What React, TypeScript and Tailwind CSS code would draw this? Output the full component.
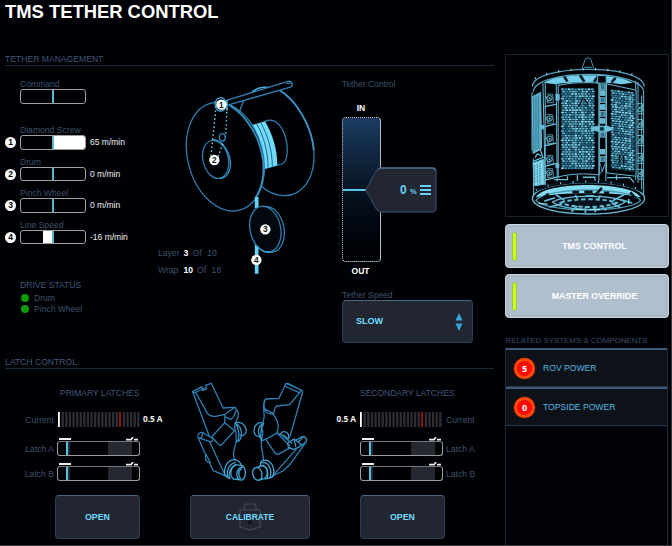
import React from "react";

const LABEL = "text-[8.6px] leading-[10px] text-[#3e516c] whitespace-nowrap";
const PANEL =
  "rounded-[4px] border border-[#2c3d55] border-t-[#48688a] bg-[#212630] text-[#6fdcff] font-bold";

function Gauge({ label, badge, value, children }: { label: string; badge?: string; value?: string; children?: React.ReactNode }) {
  return (
    <div className="flex h-[31.6px] items-start">
      <div className="flex h-[25px] w-[15px] items-end pb-[2px]">
        {badge && (
          <span className="flex size-[11px] items-center justify-center rounded-full bg-white text-[8.5px] font-bold leading-none text-black">
            {badge}
          </span>
        )}
      </div>
      <div>
        <div className={LABEL}>{label}</div>
        <div className="relative flex h-[14.5px] w-[66px] overflow-hidden rounded-[3px] border border-[#a0a0a0]">
          {children}
          <span className="absolute left-[31px] top-0 h-full w-[2px] bg-[#57b7cc]" />
        </div>
      </div>
      <div className="ml-[4px] mt-[12px] whitespace-nowrap text-[8.5px] leading-[10px] text-[#f2f2f2]">{value}</div>
    </div>
  );
}

function Heading({ children }: { children: React.ReactNode }) {
  return (
    <div className="h-[12px] w-[489px] border-b border-[#1b2a3b] text-[8.6px] leading-[11px] text-[#43567a]">{children}</div>
  );
}

function Num({ x, y, n }: { x: number; y: number; n: string }) {
  return (
    <g stroke="none">
      <circle cx={x} cy={y} r="15.5" fill="#fff" />
      <text x={x} y={y + 9} textAnchor="middle" fontSize="25" fontWeight="700" fill="#111">{n}</text>
    </g>
  );
}

function DrumDrawing() {
  return (
    <svg viewBox="0 0 510 630" className="h-[210px] w-[170px]" fill="none" stroke="#2f80b3" strokeWidth="3.8" strokeLinecap="round" strokeLinejoin="round">
      <path d="M388 57 C435 82 487 165 492 240 C497 320 458 376 400 374 C376 373 352 362 334 346" />
      <path d="M388 57 C442 90 485 168 491 235" stroke="#3a92c6" strokeWidth="5.5" />
      <path d="M308 62 C322 50 340 47 356 50" stroke="#4ab0de" strokeWidth="5" />
      <path d="M345 151 C367 140 389 153 403 188 C417 226 414 272 396 279 L344 293" />
      <path d="M306 162 L345 151 C368 190 382 236 382 283 L344 293 C341 246 331 198 306 162Z" fill="#6fdcff" stroke="none" />
      <path d="M321 160 C342 197 354 244 354 288 M333 156 C354 194 367 240 367 285" stroke="#12354a" strokeWidth="2.2" />
      <ellipse cx="226" cy="257" rx="112.7" ry="166" transform="rotate(-15 226 257)" fill="#000104" />
      <path d="M240 104 C288 133 329 195 339 268 C343 310 336 350 318 378" stroke="#388fbe" strokeWidth="5" />
      <path d="M280 91 L268 123" />
      <path d="M230 88 L414 31 C429 29 431 46 419 49 L230 103 Z" fill="#000104" strokeWidth="4" />
      <path d="M409 38 L422 36" strokeWidth="3" />
      <ellipse cx="197" cy="265" rx="38" ry="58" transform="rotate(-13 197 265)" />
      <path d="M190 207 C214 207 233 233 240 263 C246 296 233 321 211 322" stroke="#3c92bf" strokeWidth="4" />
      <g stroke="#66d6f4" strokeWidth="5" strokeDasharray="0.1 12">
        <path d="M198 108 L183 253" />
        <path d="M231 113 L227 193 L204 258" />
      </g>
      <ellipse cx="217" cy="199" rx="9" ry="11" />
      <ellipse cx="212" cy="100" rx="17" ry="20" stroke="#49a7d2" />
      <path d="M231 88 V118" stroke="#58bfe0" />
      <path d="M320 378 V411 M320 520 V608" stroke="#67d4f7" strokeWidth="11" strokeLinecap="butt" />
      <ellipse cx="357" cy="475" rx="45" ry="69" transform="rotate(-11 357 475)" fill="#000207" />
      <ellipse cx="346" cy="474" rx="46" ry="69" transform="rotate(-12 346 474)" fill="#02060d" />
      <path d="M322 526 C336 544 352 546 367 543" stroke="#41a0cc" />
      <Num x={214} y={101} n="1" />
      <Num x={193} y={267} n="2" />
      <Num x={346} y={475} n="3" />
      <Num x={319} y={567} n="4" />
    </svg>
  );
}

function LatchDrawing() {
  return (
    <svg viewBox="0 0 420 330" className="h-[110px] w-[140px]" fill="none" stroke="#2d82b8" strokeWidth="3.8" strokeLinejoin="round" strokeLinecap="round">
      <path d="M38 50 L66 35 L68 46 L79 43 L77 31 L94 25 L129 99 L165 97 C176 108 178 119 172 131 L166 143 C162 154 164 163 168 173 L169 199" />
      <path d="M38 50 L42 54 L74 39 M38 50 L88 184 M48 54 L83 116 C89 125 97 124 107 124 L135 118 L165 97" />
      <path d="M135 118 L134 143 L161 165 M134 125 L153 133 C162 127 166 114 168 106 M134 143 L95 186 L119 211 L126 208 L157 174 L164 166" />
      <path d="M53 183 C54 175 62 171 69 173 L100 192 C99 198 94 202 89 200 L54 187 M69 173 L64 189 M54 187 L78 242 M89 200 L135 300 M79 239 C73 249 78 261 89 264 L99 286 L134 302 M79 239 L91 264" />
      <path d="M169 199 C164 223 155 237 165 255" />
      <path d="M166 144 C181 137 195 149 199 164 C199 178 190 184 181 181 M166 144 C178 151 186 164 184 181 C183 193 177 201 169 199 M169 149 C176 163 180 178 174 197" stroke="#389bcd" />
      <path d="M135 302 C129 280 141 256 162 254 C172 253 182 263 184 271 M144 309 C137 291 147 266 166 263 M135 302 L150 311 C143 299 151 276 166 271" stroke="#45a9d8" />
      <path d="M166 269 L187 272 C199 280 199 306 187 315 L160 312 C148 302 151 278 166 269 M187 276 C168 281 165 308 180 314 M184 282 C175 288 174 302 181 309" stroke="#3fa4d4" strokeWidth="4" />
      <path d="M318 25 L364 45 L368 51 L330 184 M318 25 L297 70 L257 72 C250 85 250 97 257 104 L281 116 M323 25 L367 47 M360 51 L329 89 L290 93 C283 97 283 109 281 116 M314 33 L356 52 M360 51 L364 45" />
      <path d="M254 75 C245 101 258 119 250 137 L244 157 L249 171 L244 198 M250 99 L261 114 L280 118 C291 132 296 150 294 163 L291 174" />
      <path d="M244 198 L263 190 L291 174 L305 180 L335 205 M258 194 L286 236 L294 238 L331 218 M291 174 L329 212" />
      <path d="M248 144 C233 139 222 153 222 167 C222 180 231 186 241 184 M247 146 C236 153 232 169 239 184 L245 197 M251 145 C242 162 240 181 246 197" stroke="#389bcd" />
      <path d="M302 178 C306 166 321 169 325 178 L327 191 M309 180 L326 192 M323 204 L342 192 L355 201 L371 184 L380 192 L379 200 L354 218 L340 223 L325 217Z M342 192 L347 214 M355 201 L364 212 M348 195 L364 186 L371 184" stroke="#3999c9" />
      <path d="M379 200 L330 268 L309 288 L277 303 M350 221 L282 298 M244 198 C242 220 251 237 250 256" />
      <path d="M242 269 C237 259 256 250 267 259 C280 269 287 290 276 307 L256 312 M246 264 C264 259 278 282 270 309 M239 273 C255 267 267 285 262 307" stroke="#45a9d8" />
      <path d="M230 277 L249 271 C266 278 264 304 253 311 L238 315 M230 277 C211 281 216 313 235 316 C252 313 248 280 230 277Z" stroke="#3fa4d4" strokeWidth="4" />
    </svg>
  );
}

function CageDrawing() {
  const rows = Array.from({ length: 36 }, (_, r) => r);
  const cols = Array.from({ length: 12 }, (_, c) => c);
  const shades = ["#5db4cf", "#3a86a4", "#86dcf4", "#52a6c4", "#296683", "#6cc8e2"];
  const mesh = (x: number, y: number, nc: number, nr: number, sy: number) =>
    rows.slice(0, nr).flatMap((r) =>
      cols.slice(0, nc).map((c) => (
        <rect key={r + "-" + c} stroke="none" x={x + c * 10 + (r % 2) * 3} y={y + r * 7 + c * sy} width="8" height="5" fill={shades[(r * 5 + c * 7 + ((r * c) % 5)) % 6]} />
      ))
    );
  return (
    <svg viewBox="16 13 486 486" className="h-full w-full" fill="none" stroke="#65bcd7" strokeWidth="3">
      <path d="M244 53 L254 25 Q262 18 270 25 L279 53 M250 50 H274" stroke="#4a94af" />
      <path d="M94 108 C98 40 428 38 432 108 M97 124 C100 55 425 54 430 124" stroke="#559fba" strokeWidth="4" />
      <path d="M128 97 C170 66 350 66 398 97 L362 101 C312 93 210 93 164 101Z" fill="#76cfea" stroke="none" />
      <path d="M238 74 L251 94 M294 76 L280 94 M190 78 L200 93 M345 82 L333 96" stroke="#041a28" strokeWidth="8" />
      <path d="M102 84 C170 46 358 46 426 84" stroke="#93dff0" strokeDasharray="3 34" strokeWidth="7" />
      <path d="M93 125 V303 M97 325 L98 447 M430 123 V445 M126 97 L133 407 M133 97 V405 M166 94 L169 395 M174 101 V384 M406 91 V390 M413 94 V400 M424 135 V425" />
      <path d="M94 139 L119 126 L122 294 L96 307Z" fill="#56a9c6" />
      <path d="M96 339 L128 328 L130 403 L101 408Z" fill="#7fd4ea" />
      <g stroke="#0d394e" strokeWidth="2" strokeDasharray="4 3">
        <path d="M98 145V303 M105 142V298 M112 138V296 M101 346V400 M109 343V400 M117 340V400" />
      </g>
      <path d="M95 310 L118 298 L126 322 L96 334 M102 323 L110 311 L120 318 M131 169 L165 162 M131 229 L166 221 M131 287 L167 279 M131 349 L168 340 M133 391 L170 381" strokeWidth="4" />
      {[143, 205, 266, 328, 368].map((y) => (
        <g key={y}>
          <circle cx="146" cy={y} r="8" />
          <circle cx="146" cy={y} r="2" fill="#91ddec" />
          <path d={`M137 ${y - 12} H155 L158 ${y + 14} H138 L151 ${y + 2} M135 ${y - 7} L141 ${y + 11}`} strokeWidth="2.2" />
        </g>
      ))}
      <path d="M172 105 C210 96 254 95 296 98 V375 C252 370 213 371 172 381Z" fill="#000207" strokeWidth="3" />
      <path d="M318 100 L407 119 V379 L318 369Z" fill="#000207" />
      <rect x="181" y="113" width="100" height="246" fill="#0c2735" stroke="none" />
      <path d="M330 117 L405 130 V367 L330 358Z" fill="#0c2735" stroke="none" />
      {mesh(181, 114, 10, 35, 0)}
      {mesh(331, 118, 7, 34, 1.1)}
      <path d="M225 115 V356 M244 116V280 M390 132V362" stroke="#86d6e8" opacity=".5" />
      <path d="M247 141 L236 164 M250 145 L263 162" stroke="#041019" strokeWidth="4" />
      <path d="M357 313 V341 M369 316 V344" stroke="#04131c" strokeWidth="5" />
      <path d="M295 75 V394 M316 75 V394" />
      <rect x="291" y="75" width="26" height="23" fill="#000207" />
      {[103, 121, 142, 163, 184, 205, 247, 298, 320].map((y, i) => (
        <rect key={y} x="299" y={y} width="14" height="14" fill={i % 2 ? "#63b8d1" : "#2f7087"} stroke="#89d8e9" strokeWidth="2" />
      ))}
      <path d="M271 232 L290 228 H323 L338 237 L323 243 H290 L272 239Z" fill="#6cc1d8" />
      <circle cx="304" cy="236" r="8" fill="#0d3446" />
      <path d="M298 338 L305 365 L314 338 M298 372 L315 345" strokeWidth="2" />
      <path d="M164 132 H175 V149 H164 M164 342 H174 V353 H164 M117 226 H129 V236 H116" fill="#65bcd7" />
      {[160, 208, 256, 310, 358].map((y) => (
        <path key={y} d={`M410 ${y} H426 V${y + 23} H411 L424 ${y + 5} M414 ${y + 30} H429 M415 ${y + 9} L424 ${y + 20}`} strokeWidth="3" />
      ))}
      <path d="M160 389 H200 V379 M230 376 V394 M246 382 H283 V396 M320 383 H389 L401 398 M348 376 V390" strokeWidth="4" />
      <path d="M94 446 C100 382 428 382 433 446 C427 508 101 509 94 446Z" fill="#000207" strokeWidth="4" />
      <path d="M105 443 C125 393 398 393 421 443 C363 426 167 426 105 443Z" fill="#85dcf0" stroke="none" />
      <path d="M102 424 C165 386 364 386 425 424" stroke="#00101b" strokeWidth="8" />
      <path d="M105 421 C165 386 360 386 420 421" stroke="#8edff1" strokeDasharray="3 35" strokeWidth="6" />
      <path d="M105 452 C140 410 385 410 421 452 C386 491 143 491 105 452Z" stroke="#4d98b2" strokeWidth="4" />
      <path d="M155 457 C190 434 341 434 374 457 C335 486 192 486 155 457Z" fill="#03121b" strokeWidth="4" />
      <path d="M180 459 C215 445 316 445 348 459 C310 476 216 476 180 459Z" strokeDasharray="13 8" strokeWidth="6" />
      <path d="M143 432 L119 452 M304 414 L286 434 M251 426 H276 M215 427 H235 M310 429 H326 M390 428 L407 447" stroke="#04131e" strokeWidth="8" />
      <path d="M130 454 L163 444 M145 472 L183 463 M165 435 L191 452 M212 486 L230 469 M254 490 V470 M285 488 L279 468 M316 482 L302 466 M360 473 L333 460 M396 460 L360 449 M371 435 L338 452 M224 435 L230 447 M255 438 H281 M300 437 L292 449" strokeWidth="5" />
      <path d="M112 461 L140 463 M385 448 V463 M225 479 H248 M268 480 H298" stroke="#90dfed" strokeWidth="4" />
    </svg>
  );
}

function SpoolPanel() {
  return (
    <div className="relative mt-[5px] h-[282px] w-[187px]">
      <DrumDrawing />
      <div className="absolute left-[8px] top-[177px] flex h-[10px] text-[8.6px] leading-[10px] text-[#3e516c]">
        <span className="w-[25.5px]">Layer</span><b className="w-[9px] text-white">3</b><span className="tracking-[0.15px]">Of&nbsp; 10</span>
      </div>
      <div className="absolute left-[8px] top-[194px] flex h-[10px] text-[8.6px] leading-[10px] text-[#3e516c]">
        <span className="w-[25.5px]">Wrap</span><b className="w-[13.5px] text-white">10</b><span className="tracking-[0.15px]">Of&nbsp; 18</span>
      </div>
    </div>
  );
}

function TetherControl() {
  return (
    <div className="relative w-[152px] pt-[13px]">
      <div className="h-[10px] text-[8.5px] leading-[10px] text-[#3e516c]">Tether Control</div>
      <div className="mt-[14px] h-[10px] w-[38px] text-center text-[8.5px] font-bold leading-[10px] text-white">IN</div>
      <div className="relative mt-[4px] h-[145px] w-[39px] rounded-[4px] border border-dotted border-[#d0d4d8] border-r-[#b5b9bd] bg-linear-to-b from-[#1b3b63] via-[#06111d] via-[55%] to-[#000104] [border-right-style:solid]">
        <div className="absolute left-0 top-[71px] h-[1.5px] w-[24px] bg-[#59c6e4]" />
        <svg viewBox="0 0 72 46" className="absolute left-[22px] top-[49px] h-[46px] w-[72px]">
          <path d="M1 23 L10 6 Q13 1 17 1 H67 Q71 1 71 5 V41 Q71 45 67 45 H17 Q13 45 10 40Z" fill="#212630" stroke="#30435d" strokeWidth="1.3" />
          <path d="M13 2 Q14 1 17 1 H67 Q70 1 71 4" fill="none" stroke="#48688a" strokeWidth="1.3" />
        </svg>
        <div className="absolute left-[57px] top-[65px] flex h-[14px] items-baseline font-bold leading-[14px] text-[#69d2f6]">
          <span className="w-[10px] text-[12px]">0</span>
          <span className="w-[10px] text-[7.5px]">%</span>
          <span className="flex h-[10px] w-[11px] flex-col justify-between self-center">
            <i className="h-[2px] bg-[#69d2f6]" /><i className="h-[2px] bg-[#69d2f6]" /><i className="h-[2px] bg-[#69d2f6]" />
          </span>
        </div>
      </div>
      <div className="mt-[4px] h-[10px] w-[37px] text-center text-[8.5px] font-bold leading-[10px] text-white">OUT</div>
      <div className="mt-[14px] h-[10px] text-[8.5px] leading-[10px] text-[#3e516c]">Tether Speed</div>
      <div className={PANEL + " flex h-[43px] w-[131px] items-center justify-between pl-[13px] pr-[9px] text-[9px]"}>
        SLOW
        <svg viewBox="0 0 8 20" className="h-[20px] w-[8px]" fill="#34a7df"><path d="M4 1 L7.5 8.5 H.5Z M4 19 L7.5 11.5 H.5Z" /></svg>
      </div>
    </div>
  );
}

function CurrentMeter() {
  return (
    <svg viewBox="0 0 82 15" className="h-[15px] w-[82px] shrink-0">
      {Array.from({ length: 23 }, (_, i) => (
        <rect key={i} x={i * 3.6} y="0" height="15" width={i === 0 ? 1.8 : i === 17 ? 1.6 : 2.3} fill={i === 0 ? "#fff" : i === 17 ? "#b5161c" : "#2d2e34"} />
      ))}
    </svg>
  );
}

function LatchBar() {
  return (
    <div className="h-[19px] w-[83px]">
      <div className="flex h-[4px] justify-between pl-[2px] pr-[2px]">
        <i className="mt-[1px] h-[2px] w-[12px] bg-[#eee]" />
        <svg viewBox="0 0 12 4" className="h-[4px] w-[12px]" fill="none" stroke="#eee" strokeWidth="1.8"><path d="M0 2.7 H5 L7 .2 M8 2.7 H12" /></svg>
      </div>
      <div className="flex h-[15px] rounded-[3px] border border-[#9b9b9b] border-t-[#74777b]">
        <i className="ml-[8px] w-[2px] bg-[#55c4e2]" />
        <i className="w-[2px] bg-[#252932]" />
        <i className="ml-[38px] w-[24px] bg-[#252830]" />
      </div>
    </div>
  );
}

function Latches({ side }: { side: "left" | "right" }) {
  const left = side === "left";
  const dir = left ? "flex" : "flex flex-row-reverse justify-end";
  const amps = "whitespace-nowrap font-['Open_Sans'] text-[8.2px] leading-none text-[#f2f2f2]";
  return (
    <div className={left ? "w-[175px]" : "w-[174px]"}>
      <div className={"h-[10px] text-[8.5px] leading-[10px] text-[#43567a] " + (left ? "pl-[55px]" : "pl-[40px]")}>
        {left ? "PRIMARY LATCHES" : "SECONDARY LATCHES"}
      </div>
      <div className="mt-[14px] flex h-[15px] items-center">
        {left ? <span className={LABEL + " mr-[4px] w-[49px] text-right"}>Current</span> : <b className={amps + " mr-[4px] w-[36px] text-right"}>0.5 A</b>}
        <CurrentMeter />
        {left ? <b className={amps + " ml-[3px]"}>0.5 A</b> : <span className={LABEL + " ml-[4px]"}>Current</span>}
      </div>
      {["Latch A", "Latch B"].map((t, i) => (
        <div key={t} className={dir + " h-[19px] " + (i ? "mt-[6px]" : "mt-[10px]") + (left ? "" : " pl-[40px]")}>
          <span className={LABEL + " mt-[7px] " + (left ? "mr-[3px] w-[49px] text-right" : "ml-[3px]")}>{t}</span>
          <LatchBar />
        </div>
      ))}
      <div className={PANEL + " mt-[14px] flex h-[44px] w-[85px] items-center justify-center pt-[1px] text-[8.8px] " + (left ? "ml-[50px]" : "ml-[40px]")}>OPEN</div>
    </div>
  );
}

function SideButton({ children }: { children: string }) {
  return (
    <div className="flex h-[44px] w-[164px] items-center rounded-[4px] border border-[#c9d3da] bg-[#b0bfce] pl-[6px] outline-1 -outline-offset-3 outline-[#a6b4c1]">
      <i className="h-[29px] w-[5px] rounded-[2px] border border-[#8fc46b] bg-[#d5fb00]" />
      <b className="flex-1 pl-[4px] pt-[1px] text-center text-[8.8px] text-white">{children}</b>
    </div>
  );
}

function SystemRow({ n, children }: { n: string; children: string }) {
  return (
    <div className="flex h-[39px] items-center border-b border-t-2 border-b-[#243750] border-t-[#3f5a79] bg-[#0d1118] pl-[8px]">
      <b className="flex size-[21px] items-center justify-center rounded-full border-[3px] border-[#ff4a0c] bg-[#ff0805] font-['Open_Sans'] text-[9px] leading-none text-white shadow-[0_0_2px_#8b2504]">{n}</b>
      <span className="ml-[8px] text-[8.6px] text-[#55b8e2]">{children}</span>
    </div>
  );
}

export default function App() {
  return (
    <div className="flex h-[546px] w-[672px] flex-col overflow-hidden border-b border-r border-[#38393c] bg-[#000104] font-['Liberation_Sans',Arial,sans-serif]">
      <h1 className="h-[54px] shrink-0 pl-[5px] text-[18.4px] font-bold leading-[23px] text-white">TMS TETHER CONTROL</h1>
      <main className="flex h-[491px] shrink-0 gap-[11px] pl-[5px]">
        <div className="w-[489px] shrink-0">
          <Heading>TETHER MANAGEMENT</Heading>
          <section className="flex h-[291px]">
            <div className="w-[145px] shrink-0 pt-[13px]">
              <div className="h-[46px]"><Gauge label="Command" /></div>
              <Gauge label="Diamond Screw" badge="1" value="65 m/min"><i className="ml-[32px] flex-1 bg-white" /></Gauge>
              <Gauge label="Drum" badge="2" value="0 m/min" />
              <Gauge label="Pinch Wheel" badge="3" value="0 m/min" />
              <Gauge label="Line Speed" badge="4" value="-16 m/min"><i className="ml-[21.5px] w-[10px] bg-white" /></Gauge>
              <div className="pl-[15px] pt-[28.6px]">
                <div className="text-[8.6px] leading-[10px] text-[#43567a]">DRIVE STATUS</div>
                <div className="mt-[3px] flex h-[11px] items-center"><i className="ml-[1px] mr-[5px] size-[8px] rounded-full bg-[#0d9c05]" /><span className={LABEL}>Drum</span></div>
                <div className="flex h-[11px] items-center"><i className="ml-[1px] mr-[5px] size-[8px] rounded-full bg-[#0d9c05]" /><span className={LABEL}>Pinch Wheel</span></div>
              </div>
            </div>
            <div className="w-[192px] shrink-0"><SpoolPanel /></div>
            <TetherControl />
          </section>
          <Heading>LATCH CONTROL</Heading>
          <section className="flex pt-[19px]">
            <Latches side="left" />
            <div className="w-[140px] shrink-0">
              <div className="-mt-[13px] h-[120px]"><LatchDrawing /></div>
              <div className={PANEL + " relative ml-[10px] flex h-[44px] w-[120px] items-center justify-center text-[8.5px]"}>
                <svg viewBox="0 0 22 28" className="absolute left-[48px] top-[7px] h-[28px] w-[22px]" fill="none" stroke="#3c4254" strokeWidth="1.5">
                  <path d="M5 7 V4 Q5 1 8 1 H14 Q17 1 17 4 V7 M1 7 H21 V24 L11 27 L1 24Z" /><path d="M11 15 L14 21 H8Z" fill="#10141b" stroke="none" />
                </svg>
                <span className="relative">CALIBRATE</span>
              </div>
            </div>
            <Latches side="right" />
          </section>
        </div>
        <aside className="flex h-[491px] w-[164px] shrink-0 flex-col">
          <div className="h-[163px] shrink-0 border border-[#1b222d]"><CageDrawing /></div>
          <div className="mt-[7px] flex shrink-0 flex-col gap-[6px]">
            <SideButton>TMS CONTROL</SideButton>
            <SideButton>MASTER OVERRIDE</SideButton>
          </div>
          <div className="mt-[18px] h-[12px] shrink-0 whitespace-nowrap pl-[0.5px] text-[7.9px] leading-[10px] text-[#3b4c68]">RELATED SYSTEMS &amp; COMPONENTS</div>
          <div className="min-h-0 w-[163px] flex-1 border-x border-[#1d2b3d] bg-[#000207]">
            <SystemRow n="5">ROV POWER</SystemRow>
            <SystemRow n="0">TOPSIDE POWER</SystemRow>
          </div>
        </aside>
      </main>
    </div>
  );
}
